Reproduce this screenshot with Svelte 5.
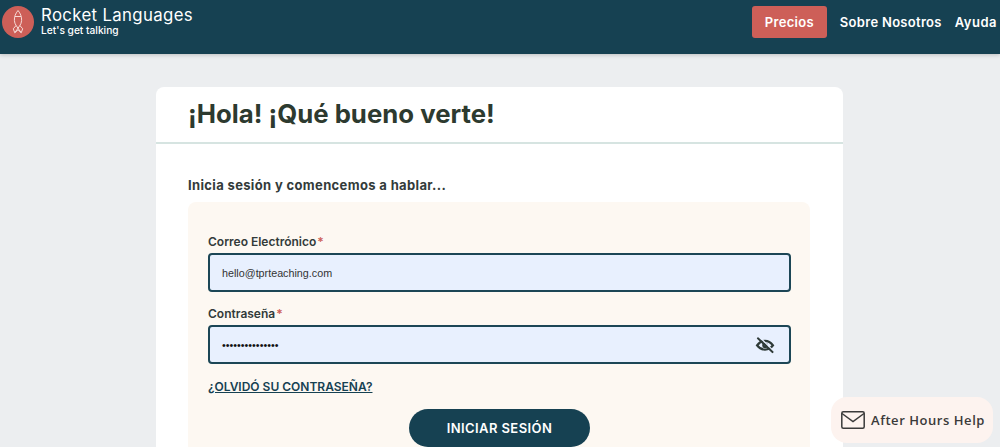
<script>
  const fields = [
    { label: "Correo Electrónico", type: "text", value: "hello@tprteaching.com" },
    { label: "Contraseña", type: "password", value: "•••••••••••••••" }
  ];
</script>

<div class="page">
  <header class="topbar">
    <a class="brand" href="#home">
      <span class="logo">
        <svg viewBox="0 0 32 32" width="32" height="32" fill="none" stroke="#fbe6e3" stroke-width="0.9" stroke-linejoin="round">
          <path d="M16 4.500c-2.600 3-3.800 6.500-3.600 10 .1 2 .8 3.600 1.700 5l4.800 6.800" />
          <path d="M16 4.500c2.600 3 3.800 6.500 3.600 10-.1 2-.8 3.600-1.700 5l-4.800 6.800" />
          <path d="M13 10.500h6" />
          <path d="M14.100 19.500l-2.800 3.300 1.500 4 3.200-3" />
          <path d="M17.900 19.500l2.800 3.300-1.500 4-3.200-3" />
        </svg>
      </span>
      <span class="brand-text">
        <span class="brand-name">Rocket Languages</span>
        <span class="brand-tag">Let's get talking</span>
      </span>
    </a>
    <nav class="nav">
      <a class="price" href="#precios">Precios</a>
      <a href="#nosotros">Sobre Nosotros</a>
      <a class="help-link" href="#ayuda">Ayuda</a>
    </nav>
  </header>

  <main class="card">
    <h1>¡Hola! ¡Qué bueno verte!</h1>
    <div class="body">
      <h2>Inicia sesión y comencemos a hablar...</h2>
      <form class="panel">
        {#each fields as f}
          <div class="field">
            <span class="label">{f.label}<em>*</em></span>
            <div class="input" class:secret={f.type === "password"}>
              <span>{f.value}</span>
              {#if f.type === "password"}
                <svg viewBox="0 0 24 24" width="20" height="20" fill="none" stroke="#2f3b38" stroke-width="2.800" stroke-linecap="round">
                  <path d="M2.500 12.500c2.500-3.500 5.800-5.500 9.500-5.500s7 2 9.500 5.500c-2.500 3.500-5.800 5-9.500 5s-7-1.500-9.500-5z" />
                  <circle cx="12" cy="12.300" r="2" />
                  <path d="M5.500 2.500l18 18" stroke="#e8f0fe" stroke-width="1.500" />
                  <path d="M3.500 4l17.500 16.500" stroke-width="2.400" />
                </svg>
              {/if}
            </div>
          </div>
        {/each}
        <a class="forgot" href="#forgot">¿OLVIDÓ SU CONTRASEÑA?</a>
        <button type="button" class="submit">INICIAR SESIÓN</button>
      </form>
    </div>
  </main>

  <aside class="help">
    <svg viewBox="0 0 24 18" width="24" height="18" fill="none" stroke="#3a3a3a" stroke-width="1.500">
      <rect x="0.800" y="0.800" width="22.400" height="16.400" rx="1.500" />
      <path d="M1 2.500l11 8 11-8" />
    </svg>
    <span>After Hours Help</span>
  </aside>
</div>

<style>
  :global(body) {
    margin: 0;
    overflow: hidden;
    background: #eceef0;
  }
  .page {
    height: 447px;
    overflow: hidden;
    position: relative;
    font-family: Inter, "Liberation Sans", sans-serif;
    background: #eceef0;
  }
  .topbar {
    height: 54px;
    box-sizing: border-box;
    background: #164152;
    box-shadow: 0 1px 4px rgba(0, 0, 0, 0.2);
    display: flex;
    justify-content: space-between;
    padding: 6px 3px 0 2px;
  }
  .brand {
    display: flex;
    gap: 7px;
    color: #fff;
    text-decoration: none;
    height: 32px;
  }
  .logo {
    width: 32px;
    height: 32px;
    border-radius: 50%;
    background: #cd5f58;
    display: block;
  }
  .brand-text {
    display: flex;
    flex-direction: column;
  }
  .brand-name {
    font-size: 16.800px;
    line-height: 18px;
    letter-spacing: 0.35px;
    font-weight: 400;
  }
  .brand-tag {
    font-size: 10.200px;
    line-height: 13px;
    font-weight: 500;
  }
  .nav {
    display: flex;
    align-items: flex-start;
    gap: 13px;
  }
  .nav a {
    color: #fff;
    font-size: 13px;
    font-weight: 600;
    letter-spacing: 0.3px;
    line-height: 32px;
    text-decoration: none;
  }
  .nav .help-link {
    letter-spacing: 0.5px;
  }
  .nav .price {
    width: 75px;
    height: 32px;
    text-align: center;
    background: #cd5f58;
    border-radius: 3px;
  }
  .card {
    width: 687px;
    margin: 33px 0 0 156px;
    background: #fff;
    border-radius: 8px 8px 0 0;
  }
  h1 {
    margin: 0;
    height: 57px;
    box-sizing: border-box;
    padding: 8px 32px 0;
    border-bottom: 2px solid #d6e4e1;
    font-size: 25.750px;
    line-height: 38px;
    font-weight: 700;
    color: #2d3a2f;
  }
  .body {
    padding: 32px 33px 0 32px;
  }
  h2 {
    margin: 0 0 7px;
    font-size: 13px;
    line-height: 19px;
    letter-spacing: 0.35px;
    font-weight: 700;
    color: #333b3a;
  }
  .panel {
    background: #fdf8f2;
    border-radius: 8px 8px 0 0;
    padding: 32px 19px 0 20px;
    display: flex;
    flex-direction: column;
    height: 245px;
    box-sizing: border-box;
  }
  .field {
    margin-bottom: 14px;
  }
  .label {
    display: block;
    font-size: 12px;
    line-height: 16px;
    font-weight: 600;
    color: #333b3a;
    margin-bottom: 3px;
  }
  .label em {
    color: #cd5f58;
    font-style: normal;
    margin-left: 1px;
  }
  .input {
    height: 39px;
    box-sizing: border-box;
    border: 2px solid #1c4656;
    border-radius: 4px;
    background: #e8f0fe;
    display: flex;
    align-items: center;
    justify-content: space-between;
    padding: 0 14px 0 12px;
    font-family: "Liberation Sans", Arial, sans-serif;
    font-size: 10.750px;
    color: #333;
  }
  .secret {
    color: #111;
  }
  .forgot {
    font-size: 12px;
    line-height: 16px;
    font-weight: 600;
    color: #164152;
    margin-top: 1px;
    align-self: flex-start;
  }
  .submit {
    width: 181px;
    height: 38px;
    margin: 14px auto 0 auto;
    border: 0;
    border-radius: 19px;
    background: #164152;
    color: #fff;
    font-family: inherit;
    font-size: 13px;
    font-weight: 600;
    letter-spacing: 0.4px;
    padding: 0;
  }
  .help {
    position: absolute;
    left: 831px;
    top: 397px;
    width: 162px;
    height: 46px;
    box-sizing: border-box;
    border-radius: 16px;
    background: #fdf3ef;
    display: flex;
    align-items: center;
    gap: 6px;
    padding-left: 10px;
    font-family: "Open Sans", sans-serif;
    font-size: 13px;
    font-weight: 600;
    letter-spacing: 0.550px;
    color: #3a3a3a;
  }
</style>
